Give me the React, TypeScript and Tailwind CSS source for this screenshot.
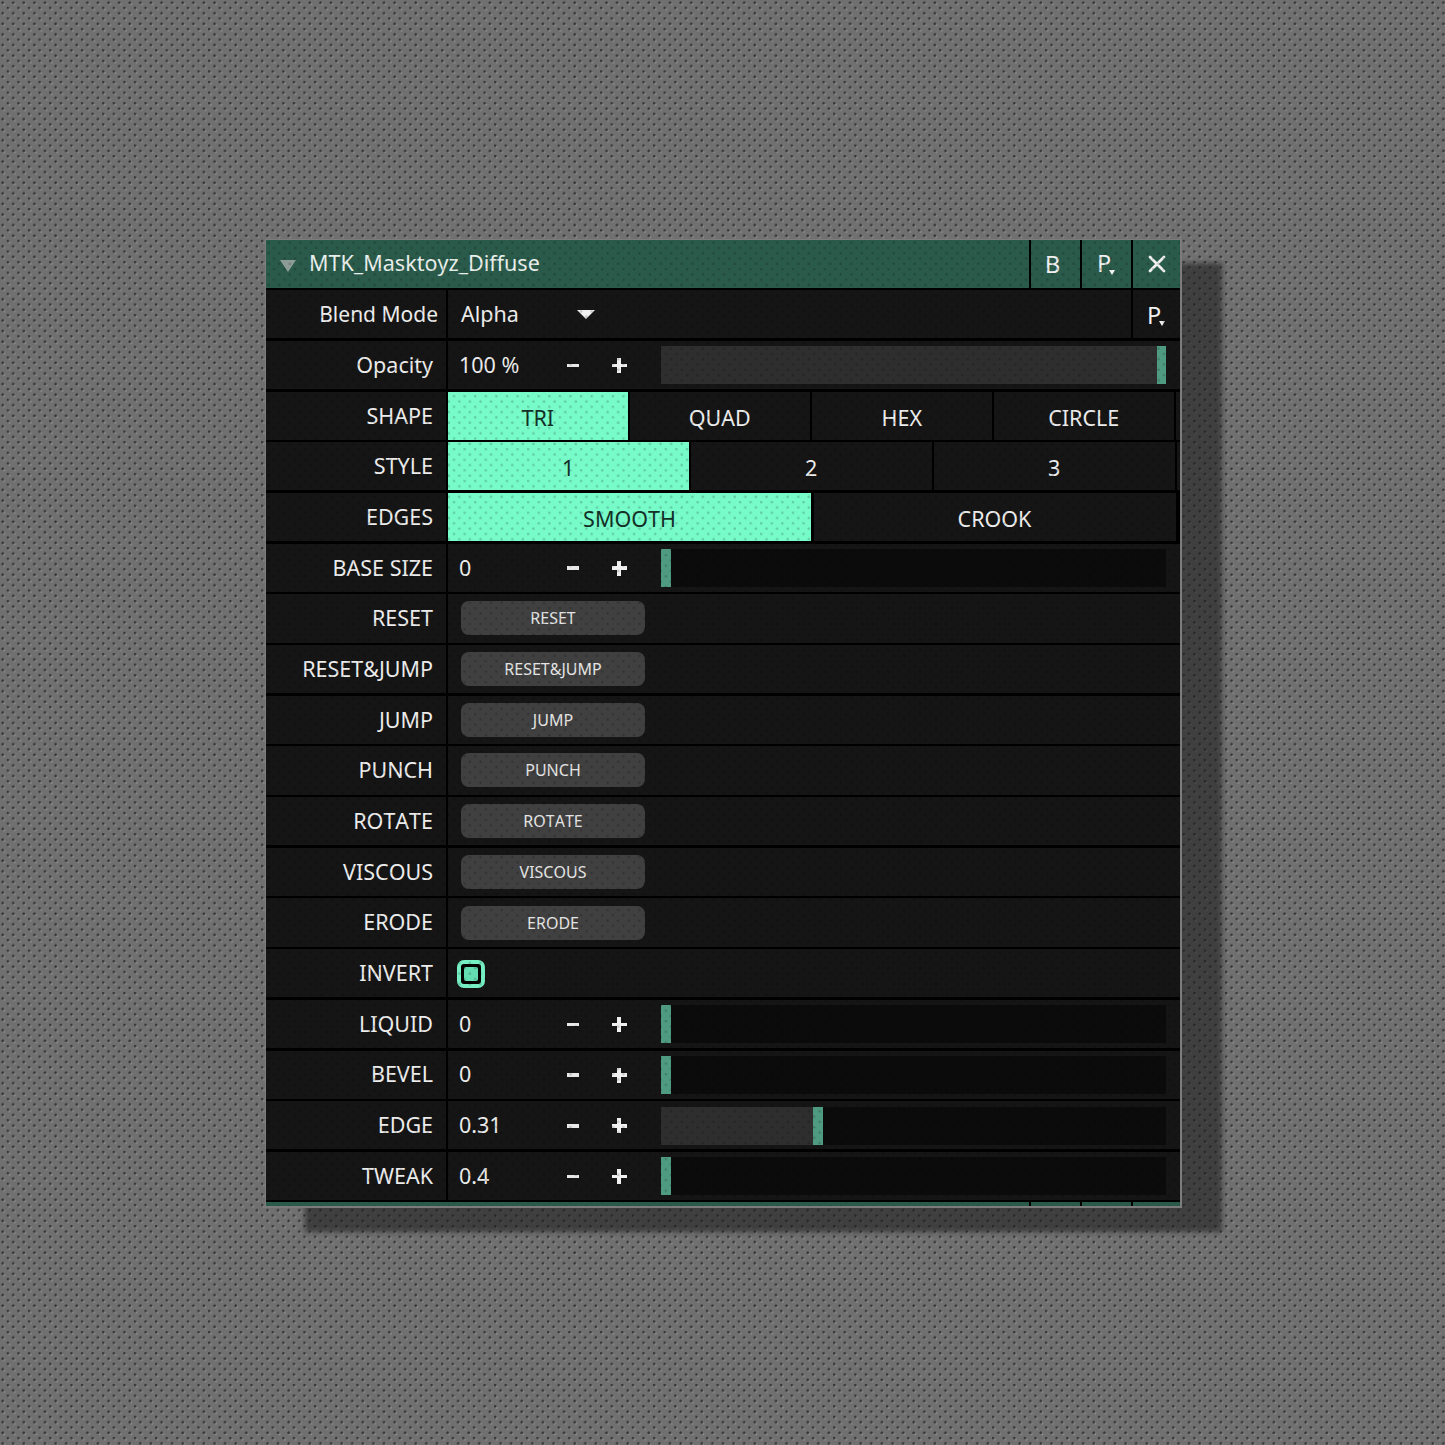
import React from 'react';
import { X } from 'lucide-react';

const cell = 'bg-[#151515] h-full';

const PButton: React.FC<{ className?: string }> = ({ className = '' }) => (
  <span className={`relative inline-block mr-[5px] text-[23.5px] leading-none text-[#f0f0f0] ${className}`}>
    P
    <span className="absolute left-[12px] bottom-[1px] w-0 h-0 border-x-[3px] border-t-[5px] border-x-transparent border-t-[#f0f0f0]" />
  </span>
);

// Fila base: etiqueta a la derecha + contenido
const Row: React.FC<{ label: string; labelClass?: string; children: React.ReactNode }> = ({
  label,
  labelClass = 'pr-[13px] text-[21.5px]',
  children,
}) => (
  <div className="flex h-[48.2px] gap-[2px]">
    <div className={`${cell} w-[180px] shrink-0 flex items-center justify-end text-[#ececec] ${labelClass}`}>
      {label}
    </div>
    {children}
  </div>
);

const Slider: React.FC<{ percent: number }> = ({ percent }) => (
  <div className="flex-1 h-[38px] ml-[2px] mt-[1px] bg-[#0b0b0b] flex">
    {percent > 0 && <div className="bg-[#2e2e2e] h-full" style={{ width: `${percent}%` }} />}
    <div className="w-[9.5px] h-full bg-[#4f9b82] shrink-0" />
    <div className="flex-1" />
  </div>
);

const NumberRow: React.FC<{ label: string; value: string; percent: number }> = ({ label, value, percent }) => (
  <Row label={label}>
    <div className={`${cell} flex-1 flex items-center pl-[11px] pr-[14px] text-[#ececec]`}>
      <span className="w-[91px] text-[21.5px]">{value}</span>
      <div className="w-[46px] mt-[1px] flex justify-center">
        <span className="w-[12px] h-[3.5px] bg-[#e8e8e8] block" />
      </div>
      <div className="w-[46px] mt-[1px] flex justify-center">
        <span className="relative w-[15px] h-[15px] block">
          <span className="absolute left-0 top-[5.75px] w-[15px] h-[3.5px] bg-[#f0f0f0]" />
          <span className="absolute left-[5.75px] top-0 w-[3.5px] h-[15px] bg-[#f0f0f0]" />
        </span>
      </div>
      <div className="w-[17px]" />
      <Slider percent={percent} />
    </div>
  </Row>
);

const Segments: React.FC<{ label: string; items: string[]; cols: string; sliver?: boolean }> = ({ label, items, cols, sliver }) => (
  <Row label={label}>
    <div className={`flex-1 grid gap-[2.5px] h-full ${cols}`}>
      {items.map((item, i) => (
        <div
          key={item}
          className={`flex items-center justify-center pt-[4px] text-[21.5px] ${
            i === 0 ? 'bg-[#77fbc9] text-[#133028]' : 'bg-[#151515] text-[#ececec]'
          }`}
        >
          {item}
        </div>
      ))}
      {sliver && <div className="bg-[#151515]" />}
    </div>
  </Row>
);

const ActionRow: React.FC<{ label: string }> = ({ label }) => (
  <Row label={label}>
    <div className={`${cell} flex-1 flex items-center pl-[13px]`}>
      <button className="w-[184px] h-[34px] rounded-lg bg-[#404040] text-[16px] text-[#e4e4e4]">{label}</button>
    </div>
  </Row>
);

const App: React.FC = () => {
  return (
    <div className="w-[1445px] h-[1445px] pl-[2px] pt-[2px] bg-[#707070] bg-[radial-gradient(circle_at_2.6px_2.6px,rgba(0,0,0,0.5)_1px,transparent_1.6px),radial-gradient(circle_at_7.9px_7.9px,rgba(0,0,0,0.5)_1px,transparent_1.6px),radial-gradient(circle_at_4px_4px,rgba(255,255,255,0.14)_1px,transparent_1.6px),radial-gradient(circle_at_9.3px_9.3px,rgba(255,255,255,0.14)_1px,transparent_1.6px)] bg-[length:10.6px_10.6px] flex items-center justify-center font-['Noto_Sans',sans-serif] [font-kerning:none] overflow-hidden">
      <div className="relative w-[917px] h-[969px] border-t border-l border-r-2 border-b-2 border-[#7c7c7c] bg-black shadow-[40px_24px_5px_rgba(30,30,30,0.6)] flex flex-col">
        {/* Cabecera */}
        <div className="flex h-[48px] gap-[2px] mb-[2.2px] shrink-0">
          <div className="flex-1 bg-[#2a5a4a] flex items-center pl-[14px] pb-[2px] text-[21.5px] text-[#e8eeea]">
            <span className="w-0 h-0 border-x-[8px] border-t-[12px] border-x-transparent border-t-[#8d9c96] mr-[13px] mt-[5px]" />
            MTK_Masktoyz_Diffuse
          </div>
          <div className="w-[49px] bg-[#2a5a4a] flex items-center justify-center pr-[6px] text-[24px] text-[#f0f0f0]">B</div>
          <div className="w-[49px] bg-[#2a5a4a] flex items-center justify-center"><PButton /></div>
          <div className="w-[47px] bg-[#2a5a4a] flex items-center justify-center">
            <X size={28} strokeWidth={2.4} className="text-[#f0f0f0]" />
          </div>
        </div>

        <div className="flex flex-col gap-[2.5px]">
          <Row label="Blend Mode" labelClass="pr-[8px] text-[21px]">
            <div className={`${cell} flex-1 flex items-center pl-[13px] text-[21.5px] text-[#ececec]`}>
              Alpha
              <span className="ml-[58px] w-0 h-0 border-x-[9px] border-t-[9px] border-x-transparent border-t-[#f0f0f0]" />
            </div>
            <div className={`${cell} w-[47px] flex items-center justify-center`}><PButton className="mt-[2px]" /></div>
          </Row>
          <NumberRow label="Opacity" value="100 %" percent={98.2} />
          <Segments label="SHAPE" items={['TRI', 'QUAD', 'HEX', 'CIRCLE']} cols="grid-cols-[repeat(4,1fr)_4px]" sliver />
          <Segments label="STYLE" items={['1', '2', '3']} cols="grid-cols-[repeat(3,1fr)_3px]" sliver />
          <Segments label="EDGES" items={['SMOOTH', 'CROOK']} cols="grid-cols-[363px_362px]" />
          <NumberRow label="BASE SIZE" value="0" percent={0} />
          <ActionRow label="RESET" />
          <ActionRow label="RESET&JUMP" />
          <ActionRow label="JUMP" />
          <ActionRow label="PUNCH" />
          <ActionRow label="ROTATE" />
          <ActionRow label="VISCOUS" />
          <ActionRow label="ERODE" />
          <Row label="INVERT">
            <div className={`${cell} flex-1 flex items-center pl-[9px]`}>
              <span className="mt-[2px] w-[28px] h-[28px] rounded-[7px] border-[4px] border-[#74eec2] bg-black flex items-center justify-center">
                <span className="w-[14px] h-[14px] rounded-[2px] bg-[#63dcb2]" />
              </span>
            </div>
          </Row>
          <NumberRow label="LIQUID" value="0" percent={0} />
          <NumberRow label="BEVEL" value="0" percent={0} />
          <NumberRow label="EDGE" value="0.31" percent={30.1} />
          <NumberRow label="TWEAK" value="0.4" percent={0} />
        </div>

        {/* Franja inferior */}
        <div className="flex-1 mt-[2px] flex gap-[2px]">
          <div className="flex-1 bg-[#2a5a4a]" />
          <div className="w-[49px] bg-[#2a5a4a]" />
          <div className="w-[49px] bg-[#2a5a4a]" />
          <div className="w-[47px] bg-[#2a5a4a]" />
        </div>

        {/* Trama de puntos sobre el panel */}
        <div className="absolute inset-0 pointer-events-none bg-[radial-gradient(circle_at_2.6px_2.6px,rgba(0,0,0,0.18)_1px,transparent_1.6px),radial-gradient(circle_at_7.9px_7.9px,rgba(0,0,0,0.18)_1px,transparent_1.6px)] bg-[length:10.6px_10.6px]" />
      </div>
    </div>
  );
};

export default App;
